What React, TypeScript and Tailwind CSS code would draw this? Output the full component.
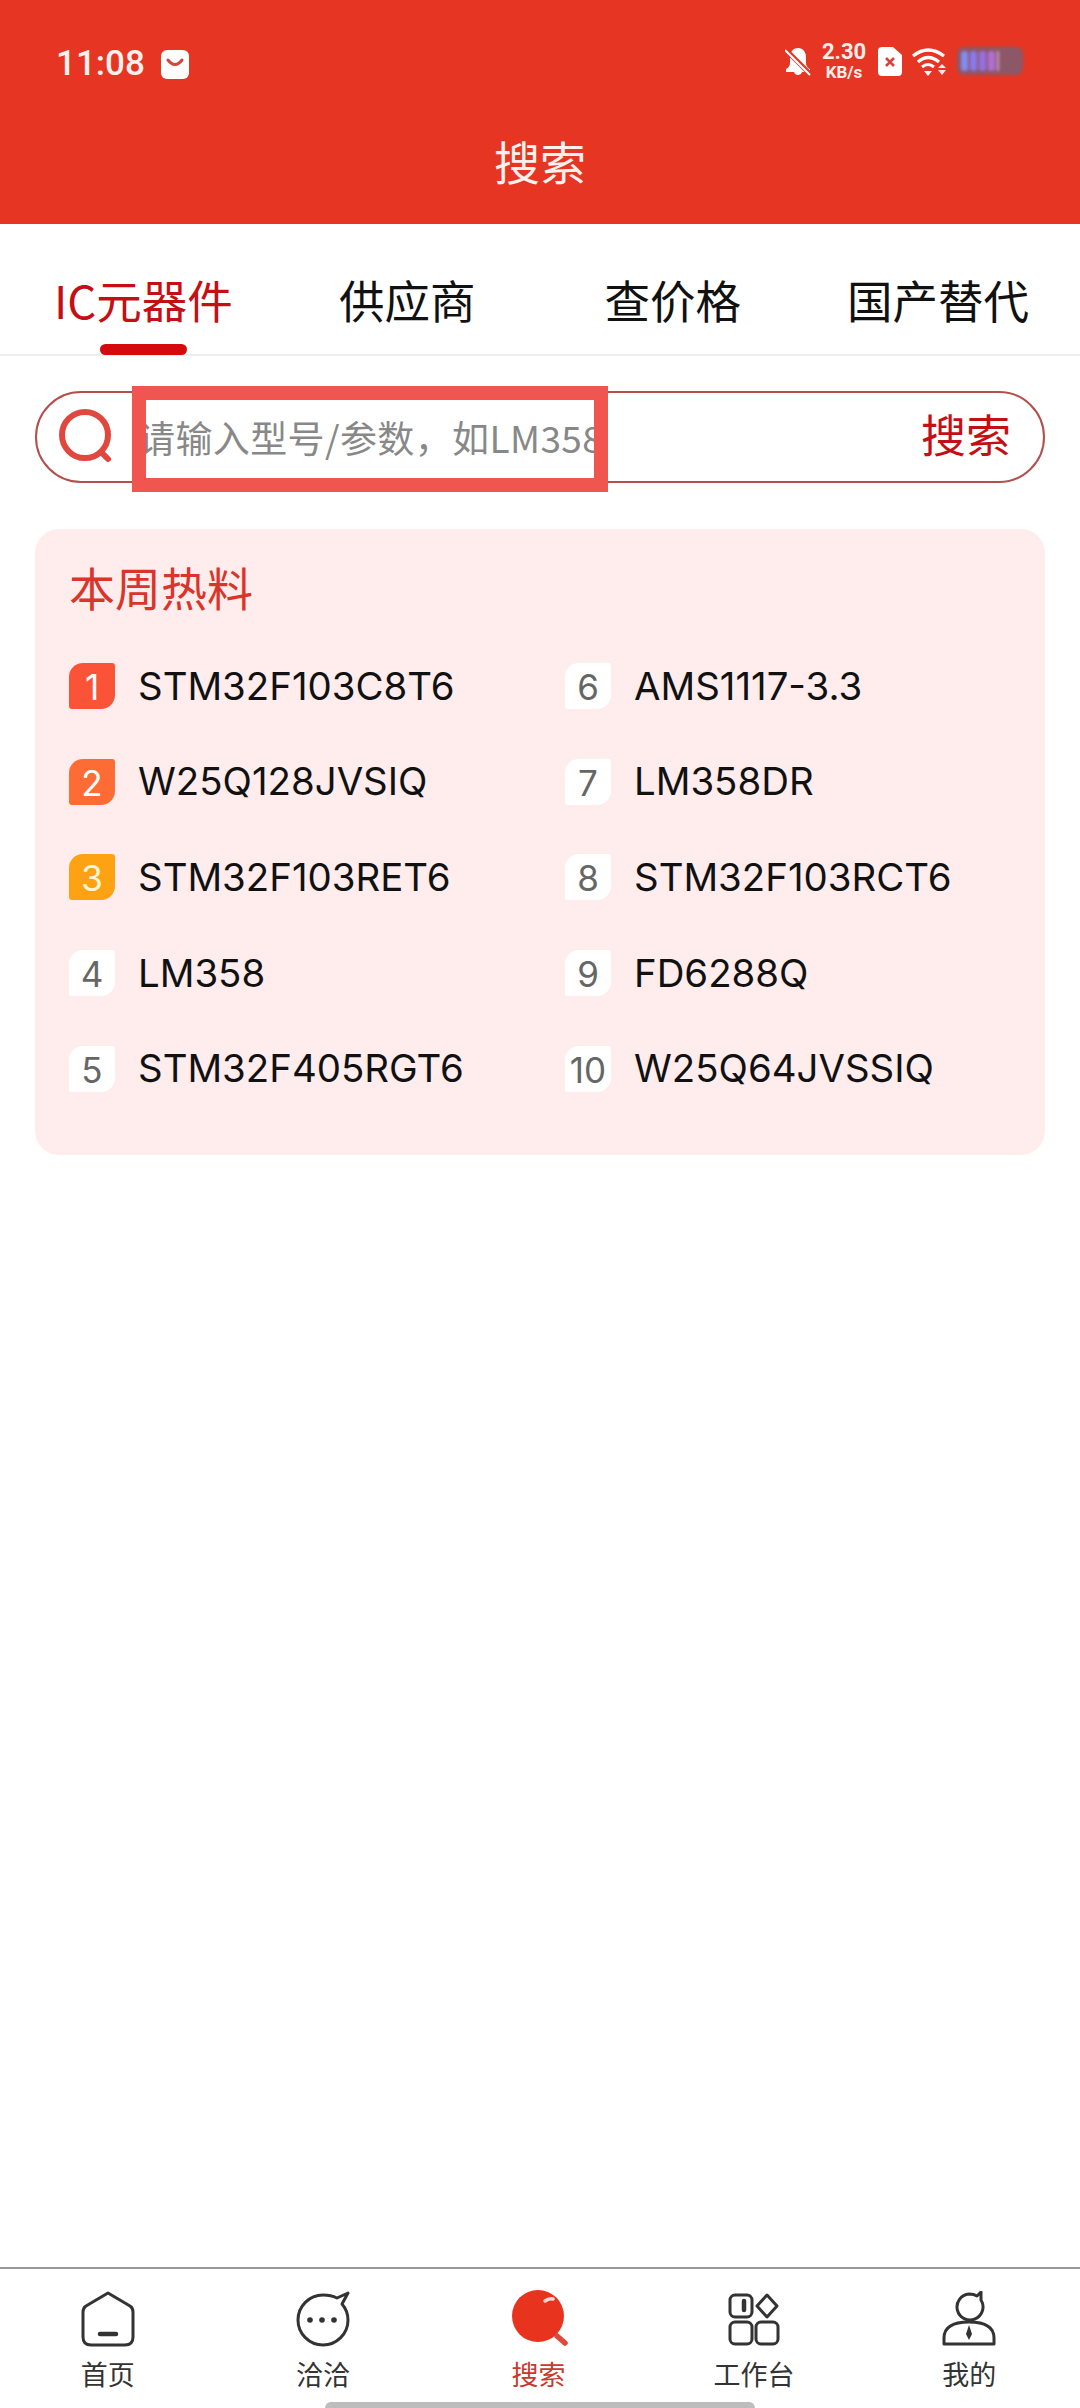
const HOT_LEFT = [
  { n: 1, name: 'STM32F103C8T6', badge: 'bg-[#fb5338] text-white' },
  { n: 2, name: 'W25Q128JVSIQ', badge: 'bg-[#fd6c35] text-white' },
  { n: 3, name: 'STM32F103RET6', badge: 'bg-[#fda313] text-[#fff6d8]' },
  { n: 4, name: 'LM358', badge: 'bg-white text-[#666666]' },
  { n: 5, name: 'STM32F405RGT6', badge: 'bg-white text-[#666666]' },
];

const HOT_RIGHT = [
  { n: 6, name: 'AMS1117-3.3', badge: 'bg-white text-[#666666]' },
  { n: 7, name: 'LM358DR', badge: 'bg-white text-[#666666]' },
  { n: 8, name: 'STM32F103RCT6', badge: 'bg-white text-[#666666]' },
  { n: 9, name: 'FD6288Q', badge: 'bg-white text-[#666666]' },
  { n: 10, name: 'W25Q64JVSSIQ', badge: 'bg-white text-[#666666]' },
];

function HotRow({ n, name, badge }: { n: number; name: string; badge: string }) {
  return (
    <div className="flex h-[95.7px] items-center">
      <span
        className={`flex h-[46px] w-[46px] items-center justify-center rounded-tl-[14px] rounded-br-[14px] rounded-tr-[3px] rounded-bl-[3px] pt-[3px] text-[35px] leading-none ${badge}`}
      >
        {n}
      </span>
      <span className="ml-[23px] text-[38.4px] leading-none text-[#111111]">{name}</span>
    </div>
  );
}

function HomeIcon() {
  return (
    <svg width="54" height="56" viewBox="0 0 54 56" fill="none" stroke="#333333" strokeWidth="3" strokeLinejoin="round">
      <path d="M27 2 L49 15 Q52 17 52 21 V46 Q52 54 44 54 H10 Q2 54 2 46 V21 Q2 17 5 15 Z" />
      <path d="M19 43 H35" strokeWidth="4.5" strokeLinecap="round" />
    </svg>
  );
}

function ChatIcon() {
  return (
    <svg width="54" height="56" viewBox="0 0 54 56" fill="none" stroke="#333333" strokeWidth="3" strokeLinejoin="round">
      <path d="M41 7 L52 2 L46 13 Q52 20 52 29 A25 25 0 1 1 27 4 Q35 4 41 7 Z" />
      <circle cx="14" cy="29" r="2.8" fill="#333333" stroke="none" />
      <circle cx="26" cy="29" r="2.8" fill="#333333" stroke="none" />
      <circle cx="38" cy="29" r="2.8" fill="#333333" stroke="none" />
    </svg>
  );
}

function SearchBallIcon() {
  return (
    <svg className="-mt-[3px] ml-[5px]" width="58" height="56" viewBox="0 0 58 56" fill="none">
      <circle cx="26" cy="26" r="26" fill="#e8341f" />
      <path d="M33 11 Q37 8 41 9" stroke="#ffd9d2" strokeWidth="3.5" strokeLinecap="round" />
      <path d="M45 46 L53 53" stroke="#e0483c" strokeWidth="5.5" strokeLinecap="round" />
    </svg>
  );
}

function WorkIcon() {
  return (
    <svg width="52" height="54" viewBox="0 0 52 54" fill="none" stroke="#333333" strokeWidth="3" strokeLinejoin="round">
      <rect x="2" y="3" width="22" height="22" rx="5" />
      <path d="M16 9 V18" strokeWidth="4.5" strokeLinecap="round" />
      <path d="M39 3 L49 14 L39 25 L29 14 Z" />
      <rect x="2" y="30" width="22" height="22" rx="5" />
      <rect x="28" y="30" width="22" height="22" rx="5" />
    </svg>
  );
}

function MineIcon() {
  return (
    <svg width="54" height="56" viewBox="0 0 54 56" fill="none" stroke="#333333" strokeWidth="3" strokeLinejoin="round">
      <path d="M35 5 L39 1 V9 A13 13 0 1 1 27 3 Q32 3 35 5 Z" />
      <path d="M2 53 V47 Q2 31 27 31 Q52 31 52 47 V53 Z" />
      <path d="M27 34 L30 43 L27 49 L24 43 Z" fill="#333333" stroke="none" />
    </svg>
  );
}

const TABS = [
  { label: '首页', icon: <HomeIcon />, active: false },
  { label: '洽洽', icon: <ChatIcon />, active: false },
  { label: '搜索', icon: <SearchBallIcon />, active: true },
  { label: '工作台', icon: <WorkIcon />, active: false },
  { label: '我的', icon: <MineIcon />, active: false },
];

function StatusBar() {
  return (
    <div className="flex h-[81px] items-end justify-between pl-[56px] pr-[57px]">
      <div className="flex items-center gap-[16px]">
        <span className="font-['Roboto',sans-serif] text-[35px] font-medium leading-[34px] text-[#fdf1ee]">11:08</span>
        <svg width="28" height="29" viewBox="0 0 28 29">
          <rect width="28" height="29" rx="6" fill="#fff" />
          <path d="M7 10 Q14 19 21 10" fill="none" stroke="#d8443a" strokeWidth="3" strokeLinecap="round" />
        </svg>
      </div>
      <div className="flex items-center">
        <svg width="26" height="29" viewBox="0 0 26 29">
          <path d="M13 1 C8 1 5 5 5 10 V16 Q5 20 1 22 V25 H9 Q10 28 13 28 Q16 28 17 25 H25 V22 Q21 20 21 16 V10 C21 5 18 1 13 1 Z" fill="#fff" />
          <path d="M0 2 L26 28" stroke="#e63623" strokeWidth="5" />
          <path d="M0 3 L25 28" stroke="#fff" strokeWidth="2" />
        </svg>
        <div className="ml-[11px] flex w-[44px] flex-col items-center font-['Roboto',sans-serif] font-bold text-[#fdeeea]">
          <span className="text-[22px] leading-[22px]">2.30</span>
          <span className="text-[17px] leading-[18px]">KB/s</span>
        </div>
        <svg className="ml-[12px]" width="24" height="29" viewBox="0 0 24 29">
          <path d="M4 0 H15 L24 8 V25 Q24 29 20 29 H4 Q0 29 0 25 V4 Q0 0 4 0 Z" fill="#fff" />
          <path d="M8 11 L16 19 M16 11 L8 19" stroke="#d8443a" strokeWidth="2.6" />
        </svg>
        <svg className="ml-[9px]" width="36" height="29" viewBox="0 0 36 29" fill="none">
          <path d="M2 9 Q17 -3 33 9" stroke="#fff" strokeWidth="3.2" />
          <path d="M7 15 Q17 6 28 15" stroke="#fff" strokeWidth="3.2" />
          <path d="M11 20 Q17 15 23 20" stroke="#fff" strokeWidth="3" />
          <path d="M13 24 H21 L17 29 Z" fill="#fff" />
          <path d="M31 17 L35 21 H27 Z M27 23 H35 L31 28 Z" fill="#ffe9e4" />
        </svg>
        <div className="ml-[10px] flex h-[28px] w-[66px] items-center gap-[2px] rounded-[7px] bg-[#8c5766] px-[4px] blur-[1.5px]">
          <span className="h-[20px] w-[7px] rounded-[3px] bg-[#7f8df0]" />
          <span className="h-[20px] w-[7px] rounded-[3px] bg-[#8a78ee]" />
          <span className="h-[20px] w-[7px] rounded-[3px] bg-[#9670e0]" />
          <span className="h-[20px] w-[7px] rounded-[3px] bg-[#b06fd6]" />
          <span className="h-[20px] w-[2px] bg-[#c9a0d8]" />
        </div>
      </div>
    </div>
  );
}

export default function App() {
  return (
    <div className="flex h-[2408px] w-[1080px] flex-col overflow-hidden bg-white font-['Inter','Noto_Sans_CJK_SC',sans-serif]">
      {/* header */}
      <header className="h-[224px] bg-[#e63623]">
        <StatusBar />
        <h1 className="mt-[52px] text-center font-['Noto_Sans_CJK_SC',sans-serif] text-[46px] font-normal leading-[54px] text-[#fdf1ee]">搜索</h1>
      </header>

      {/* tabs */}
      <nav className="relative flex h-[132px] items-center border-b-2 border-[#eeeeee] pt-[22px] font-['Noto_Sans_CJK_SC',sans-serif] text-[45.5px] leading-none text-[#111111]">
        <span className="ml-[54px] text-[#c40f14]">IC元器件</span>
        <span className="ml-[106px]">供应商</span>
        <span className="ml-[129px]">查价格</span>
        <span className="ml-[106px]">国产替代</span>
        <span className="absolute bottom-[-1px] left-[100px] h-[11px] w-[87px] rounded-full bg-[#d40a0f]" />
      </nav>

      {/* search box */}
      <div className="relative mx-[35px] mt-[35px] flex h-[92px] items-center rounded-full border-2 border-[#b3504c] pl-[21px] pr-[32px]">
        <svg className="-mt-[3px]" width="56" height="56" viewBox="0 0 56 56" fill="none" stroke="#e0483f" strokeWidth="6">
          <circle cx="27" cy="27" r="23" />
          <path d="M43 44 L50 51" strokeLinecap="round" />
        </svg>
        <span className="ml-auto -mt-[8px] font-['Noto_Sans_CJK_SC',sans-serif] text-[45px] leading-none text-[#c40f14]">搜索</span>
        <div className="absolute left-[95px] top-[-7px] h-[106px] w-[476px] overflow-hidden border-[14px] border-[#f0564f] bg-white">
          <span className="absolute left-[-8px] top-[17px] whitespace-nowrap font-['Noto_Sans_CJK_SC',sans-serif] text-[37px] leading-[40px] tracking-[0.4px] text-[#888888]">请输入型号/参数，如LM358</span>
        </div>
      </div>

      {/* hot list */}
      <section className="mx-[35px] mt-[46px] h-[626px] rounded-[24px] bg-[#ffeded] pl-[34px]">
        <h2 className="pt-[30px] font-['Noto_Sans_CJK_SC',sans-serif] text-[46px] font-normal leading-[54px] text-[#d9352a]">本周热料</h2>
        <div className="mt-[25px] grid grid-cols-[496px_1fr]">
          <div>
            {HOT_LEFT.map((item) => (
              <HotRow key={item.n} {...item} />
            ))}
          </div>
          <div>
            {HOT_RIGHT.map((item) => (
              <HotRow key={item.n} {...item} />
            ))}
          </div>
        </div>
      </section>

      {/* bottom nav */}
      <footer className="relative mt-auto h-[141px] border-t-2 border-[#999999]">
        <div className="grid grid-cols-5 pr-[3px] pt-[22px]">
          {TABS.map((tab) => (
            <div key={tab.label} className="flex flex-col items-center">
              <div className="flex h-[56px] items-center justify-center">{tab.icon}</div>
              <span className={`mt-[12px] font-['Noto_Sans_CJK_SC',sans-serif] text-[27px] leading-[30px] ${tab.active ? 'text-[#c8392f]' : 'text-[#333333]'}`}>
                {tab.label}
              </span>
            </div>
          ))}
        </div>
        <span className="absolute bottom-0 left-[325px] h-[6px] w-[430px] rounded-t-full bg-[#bdbdbd]" />
      </footer>
    </div>
  );
}
